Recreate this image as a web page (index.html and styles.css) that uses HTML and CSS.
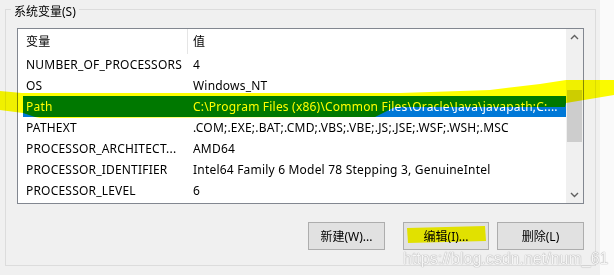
FILE: index.html
```html
<!DOCTYPE html>
<html lang="zh">
<head>
<meta charset="utf-8">
<title>系统变量</title>
<link rel="stylesheet" href="styles.css">
</head>
<body>
<div class="window">
  <div class="main">
    <div class="group">
      <div class="group-title">系统变量(S)</div>
      <div class="listbox">
        <div class="list">
          <div class="row head"><div class="c1">变量</div><div class="c2">值</div></div>
          <div class="row"><div class="c1">NUMBER_OF_PROCESSORS</div><div class="c2">4</div></div>
          <div class="row"><div class="c1">OS</div><div class="c2">Windows_NT</div></div>
          <div class="row selected"><div class="c1">Path</div><div class="c2">C:\Program Files (x86)\Common Files\Oracle\Java\javapath;C:...</div></div>
          <div class="row"><div class="c1">PATHEXT</div><div class="c2">.COM;.EXE;.BAT;.CMD;.VBS;.VBE;.JS;.JSE;.WSF;.WSH;.MSC</div></div>
          <div class="row"><div class="c1">PROCESSOR_ARCHITECT...</div><div class="c2">AMD64</div></div>
          <div class="row"><div class="c1">PROCESSOR_IDENTIFIER</div><div class="c2">Intel64 Family 6 Model 78 Stepping 3, GenuineIntel</div></div>
          <div class="row"><div class="c1">PROCESSOR_LEVEL</div><div class="c2">6</div></div>
        </div>
        <div class="scrollbar">
          <svg class="arrow" width="15" height="17" viewBox="0 0 15 17"><path d="M4 10 L7.5 6.5 L11 10" fill="none" stroke="#606060" stroke-width="1.4"/></svg>
          <div class="track"><div class="thumb"></div></div>
          <svg class="arrow" width="15" height="17" viewBox="0 0 15 17"><path d="M4 7 L7.5 10.5 L11 7" fill="none" stroke="#606060" stroke-width="1.4"/></svg>
        </div>
      </div>
      <div class="buttons">
        <button class="btn b-new">新建(W)...</button>
        <button class="btn b-edit">编辑(I)...</button>
        <button class="btn b-del">删除(L)</button>
      </div>
    </div>
  </div>
  <div class="edge"></div>
  <svg class="marker" width="614" height="275" viewBox="0 0 614 275">
    <polygon fill="#ffff00" points="0,91 22,93 200,93 400,93 490,90 540,84 566,80 614,80 614,95 566,103 565,107 395,107 375,117 40,118 35,117 23,113 0,110"/>
    <polygon fill="#ffff00" points="407,228 485,226 486,241 408,243"/>
  </svg>
  <div class="watermark">https://blog.csdn.net/num_61</div>
</div>
</body>
</html>
```
FILE: styles.css
```css
* { box-sizing: border-box; }
html, body { margin: 0; padding: 0; }
body {
  font-family: "Noto Sans", "Noto Sans CJK SC", sans-serif;
  font-size: 12px;
  color: #000;
  background: #f0f0f0;
}
.window {
  position: relative;
  width: 614px;
  height: 275px;
  display: flex;
  overflow: hidden;
}
.main {
  width: 600px;
  height: 275px;
  background: #f0f0f0;
  padding: 9px 0 0 5px;
}
.edge {
  flex: 1;
  background: #fafafa;
}
.group {
  width: 591px;
  height: 257px;
  border: 1px solid #dcdcdc;
}
.group-title {
  display: block;
  width: max-content;
  height: 16px;
  margin: -6px 0 0 5px;
  padding: 0 3px;
  line-height: 16px;
  background: #f0f0f0;
}
.listbox {
  margin: 8px 0 0 11px;
  width: 567px;
  height: 176px;
  border: 1px solid #828790;
  background: #fff;
  display: flex;
}
.list {
  width: 548px;
  overflow: hidden;
}
.row {
  display: grid;
  grid-template-columns: 164px 1fr;
  height: 21px;
  margin-left: 5px;
  align-items: center;
  white-space: nowrap;
  line-height: 21px;
  letter-spacing: 0.2px;
}
.row .c1 { padding-left: 3px; overflow: hidden; }
.row .c2 { padding-left: 6px; overflow: hidden; }
.row.head { height: 25px; line-height: 25px; }
.row.head .c2 { border-left: 1px solid #e5e5e5; padding-left: 5px; }
.row.selected {
  background: #0078d7;
  color: #fff;
}
.scrollbar {
  width: 17px;
  background: #f0f0f0;
  display: flex;
  flex-direction: column;
  align-items: center;
}
.arrow { display: block; flex: none; }
.track {
  flex: 1;
  width: 15px;
  padding-top: 44px;
}
.thumb {
  width: 15px;
  height: 52px;
  background: #cdcdcd;
}
.buttons {
  display: flex;
  justify-content: flex-end;
  margin: 18px 0 0 0;
  padding-right: 11px;
}
.btn {
  font-family: "Noto Sans", "Noto Sans CJK SC", sans-serif;
  font-size: 12px;
  color: #000;
  height: 28px;
  background: #e1e1e1;
  border: 1px solid #adadad;
  padding: 0;
}
.b-new { width: 77px; margin-right: 18px; }
.b-edit { width: 86px; margin-right: 8px; }
.b-del { width: 87px; }
.marker {
  position: absolute;
  left: 0;
  top: 0;
  mix-blend-mode: multiply;
  pointer-events: none;
}
.watermark {
  position: absolute;
  left: 403px;
  top: 251px;
  font-family: "Liberation Sans", sans-serif;
  font-size: 16px;
  line-height: 16px;
  color: #f6f6f6;
  text-shadow: 0 0 1px #999, 0 0 1px #bbb;
  white-space: nowrap;
  pointer-events: none;
}
```
